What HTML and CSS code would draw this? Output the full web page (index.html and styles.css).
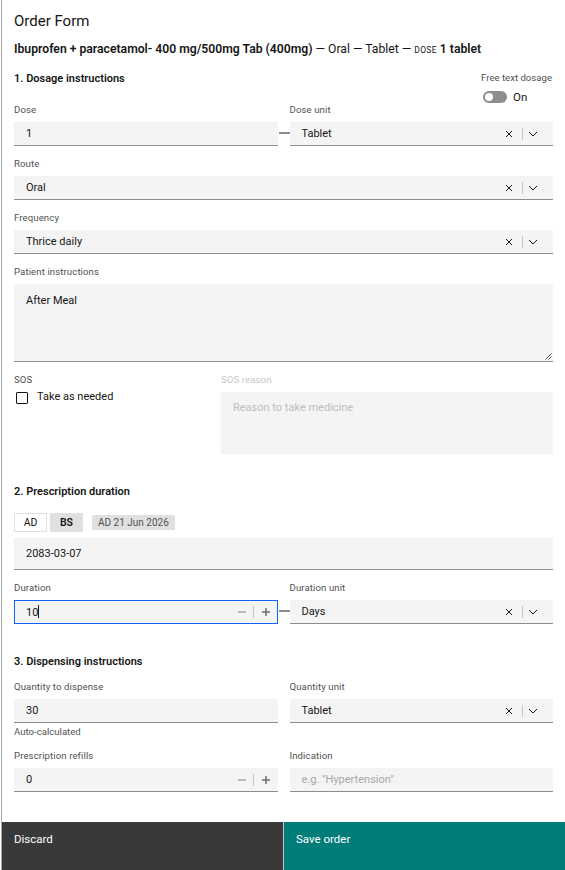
FILE: index.html
```html
<!DOCTYPE html>
<html lang="en">
<head>
<meta charset="utf-8">
<title>Order Form</title>
<link rel="stylesheet" href="styles.css">
</head>
<body>
<div class="page">
  <main class="form">
    <h1 class="title">Order Form</h1>
    <p class="drug"><strong>Ibuprofen + paracetamol- 400 mg/500mg Tab (400mg)</strong> — Oral — Tablet — <span class="caps">dose</span> <strong>1 tablet</strong></p>

    <section class="section first">
      <div class="section-head">
        <h2 class="heading">1. Dosage instructions</h2>
        <div class="freetext">
          <span class="label">Free text dosage</span>
          <div class="toggle-row"><span class="toggle"><span class="knob"></span></span><span class="toggle-text">On</span></div>
        </div>
      </div>

      <div class="pair">
        <div class="field">
          <span class="label">Dose</span>
          <div class="input linked"><span class="value">1</span></div>
        </div>
        <div class="field">
          <span class="label">Dose unit</span>
          <div class="input select">
            <span class="value">Tablet</span>
            <span class="sel-icons">
              <svg class="ico-x" width="8" height="8" viewBox="0 0 8 8"><path d="M1 1L7 7M7 1L1 7"/></svg>
              <span class="divider"></span>
              <svg class="ico-chev" width="10" height="6" viewBox="0 0 10 6"><path d="M1 1L5 5L9 1"/></svg>
            </span>
          </div>
        </div>
      </div>

      <div class="field">
        <span class="label">Route</span>
        <div class="input select">
          <span class="value">Oral</span>
          <span class="sel-icons">
            <svg class="ico-x" width="8" height="8" viewBox="0 0 8 8"><path d="M1 1L7 7M7 1L1 7"/></svg>
            <span class="divider"></span>
            <svg class="ico-chev" width="10" height="6" viewBox="0 0 10 6"><path d="M1 1L5 5L9 1"/></svg>
          </span>
        </div>
      </div>

      <div class="field">
        <span class="label">Frequency</span>
        <div class="input select">
          <span class="value">Thrice daily</span>
          <span class="sel-icons">
            <svg class="ico-x" width="8" height="8" viewBox="0 0 8 8"><path d="M1 1L7 7M7 1L1 7"/></svg>
            <span class="divider"></span>
            <svg class="ico-chev" width="10" height="6" viewBox="0 0 10 6"><path d="M1 1L5 5L9 1"/></svg>
          </span>
        </div>
      </div>

      <div class="field">
        <span class="label">Patient instructions</span>
        <div class="textarea">
          <span class="value">After Meal</span>
          <svg class="resize" width="7" height="7" viewBox="0 0 7 7"><path d="M6.5 0.5L0.5 6.5M6.5 3.5L3.5 6.5"/></svg>
        </div>
      </div>

      <div class="sos">
        <div class="field">
          <span class="label">SOS</span>
          <div class="check-row"><span class="checkbox"></span><span class="check-text">Take as needed</span></div>
        </div>
        <div class="field disabled">
          <span class="label">SOS reason</span>
          <div class="textarea short"><span class="placeholder">Reason to take medicine</span></div>
        </div>
      </div>
    </section>

    <section class="section">
      <h2 class="heading">2. Prescription duration</h2>
      <div class="cal-row">
        <button class="cal-btn">AD</button>
        <button class="cal-btn active">BS</button>
        <span class="tag">AD 21 Jun 2026</span>
      </div>
      <div class="input date"><span class="value">2083-03-07</span></div>
      <div class="pair duration">
        <div class="field">
          <span class="label">Duration</span>
          <div class="input number focused linked"><span class="value">10<span class="caret"></span></span>
            <span class="stepper">
              <svg class="ico-minus" width="8" height="8" viewBox="0 0 8 8"><path d="M0 4H8"/></svg>
              <span class="divider"></span>
              <svg class="ico-plus" width="8" height="8" viewBox="0 0 8 8"><path d="M0 4H8M4 0V8"/></svg>
            </span>
          </div>
        </div>
        <div class="field">
          <span class="label">Duration unit</span>
          <div class="input select">
            <span class="value">Days</span>
            <span class="sel-icons">
              <svg class="ico-x" width="8" height="8" viewBox="0 0 8 8"><path d="M1 1L7 7M7 1L1 7"/></svg>
              <span class="divider"></span>
              <svg class="ico-chev" width="10" height="6" viewBox="0 0 10 6"><path d="M1 1L5 5L9 1"/></svg>
            </span>
          </div>
        </div>
      </div>
    </section>

    <section class="section">
      <h2 class="heading">3. Dispensing instructions</h2>
      <div class="pair dispense">
        <div class="field">
          <span class="label">Quantity to dispense</span>
          <div class="input"><span class="value">30</span></div>
          <span class="helper">Auto-calculated</span>
        </div>
        <div class="field">
          <span class="label">Quantity unit</span>
          <div class="input select">
            <span class="value">Tablet</span>
            <span class="sel-icons">
              <svg class="ico-x" width="8" height="8" viewBox="0 0 8 8"><path d="M1 1L7 7M7 1L1 7"/></svg>
              <span class="divider"></span>
              <svg class="ico-chev" width="10" height="6" viewBox="0 0 10 6"><path d="M1 1L5 5L9 1"/></svg>
            </span>
          </div>
        </div>
        <div class="field">
          <span class="label">Prescription refills</span>
          <div class="input number"><span class="value">0</span>
            <span class="stepper">
              <svg class="ico-minus" width="8" height="8" viewBox="0 0 8 8"><path d="M0 4H8"/></svg>
              <span class="divider"></span>
              <svg class="ico-plus" width="8" height="8" viewBox="0 0 8 8"><path d="M0 4H8M4 0V8"/></svg>
            </span>
          </div>
        </div>
        <div class="field">
          <span class="label">Indication</span>
          <div class="input"><span class="placeholder">e.g. "Hypertension"</span></div>
        </div>
      </div>
    </section>
  </main>

  <footer class="actions">
    <button class="btn discard">Discard</button>
    <button class="btn save">Save order</button>
  </footer>
</div>
</body>
</html>
```

FILE: styles.css
```css
* { box-sizing: border-box; }

html, body {
  margin: 0;
  padding: 0;
  background: #ffffff;
}

body {
  font-family: Roboto, "Noto Sans", "Liberation Sans", sans-serif;
  color: #161616;
  font-size: 11px;
}

.page {
  margin-left: 1px;
  border-left: 1px solid #a8a8a8;
  height: 870px;
  display: flex;
  flex-direction: column;
}

.form {
  padding: 12px 12px 0 12px;
}

.title {
  margin: 0;
  font-size: 15px;
  line-height: 18px;
  font-weight: 400;
}

.drug {
  margin: 11px 0 0 0;
  font-size: 12.2px;
  line-height: 16px;
}

.drug strong { font-weight: 600; }

.caps {
  text-transform: uppercase;
  font-size: 8.5px;
  letter-spacing: 0.3px;
}

.section { margin-top: 31px; }
.section.first { margin-top: 14px; }

.section-head {
  display: flex;
  justify-content: space-between;
  align-items: flex-start;
}

.heading {
  margin: 0;
  font-size: 11px;
  line-height: 14px;
  font-weight: 600;
}

.freetext {
  display: flex;
  flex-direction: column;
  white-space: nowrap;
  margin-right: 1px;
}

.freetext .label { margin-bottom: 0; letter-spacing: 0; }

.toggle-row {
  display: flex;
  align-items: center;
  gap: 6px;
  margin-top: 7px;
  padding-left: 2px;
}

.toggle {
  width: 24px;
  height: 12px;
  border-radius: 6px;
  background: #8d8d8d;
  display: flex;
  align-items: center;
  padding-left: 2px;
}

.knob {
  width: 8px;
  height: 8px;
  border-radius: 50%;
  background: #ffffff;
}

.toggle-text { font-size: 11.5px; line-height: 12px; }

.label {
  display: block;
  font-size: 9.6px;
  line-height: 12px;
  color: #525252;
  margin-bottom: 6px;
  letter-spacing: 0.1px;
}

.field { margin-top: 12px; }
.section-head + .pair .field { margin-top: 1px; }

.pair {
  display: grid;
  grid-template-columns: 1fr 1fr;
  column-gap: 12px;
  align-items: start;
}

.input {
  position: relative;
  height: 24px;
  background: #f4f4f4;
  border-bottom: 1px solid #8d8d8d;
  display: flex;
  align-items: center;
  padding: 0 12px;
  font-size: 11px;
}

.input .value { flex: 1; }

.placeholder { color: #a8a8a8; }

.linked::after {
  content: "";
  position: absolute;
  right: -13px;
  top: 10px;
  width: 12px;
  height: 2px;
  background: #8d8d8d;
}

.sel-icons {
  display: flex;
  align-items: center;
  margin-right: 3px;
}

.ico-x path, .ico-chev path {
  stroke: #161616;
  stroke-width: 1;
  fill: none;
}

.divider {
  width: 1px;
  height: 12px;
  background: #c6c6c6;
  margin: 0 5px 0 9px;
}

.textarea {
  position: relative;
  height: 78px;
  background: #f4f4f4;
  border-bottom: 1px solid #8d8d8d;
  padding: 10px 12px;
  font-size: 11px;
  line-height: 14px;
}

.textarea.short {
  height: 62px;
  border-bottom: none;
  padding-top: 9px;
}

.resize {
  position: absolute;
  right: 1px;
  bottom: 1px;
}

.resize path {
  stroke: #525252;
  stroke-width: 1;
  fill: none;
}

.disabled .label { color: #c6c6c6; }
.disabled .placeholder { color: #bdbdbd; }

.sos {
  display: grid;
  grid-template-columns: 195px 1fr;
  column-gap: 12px;
  align-items: start;
}

.sos .field { margin-top: 12px; }

.check-row {
  display: flex;
  align-items: flex-start;
  gap: 9px;
  padding-left: 2px;
  margin-top: 1px;
}

.checkbox {
  width: 12px;
  height: 12px;
  border: 1px solid #161616;
  border-radius: 1px;
  margin-top: 0;
}

.check-text {
  font-size: 11px;
  line-height: 12px;
  margin-top: -1px;
}

.cal-row {
  display: flex;
  align-items: center;
  margin-top: 14px;
}

.cal-btn {
  font-family: inherit;
  font-size: 10.5px;
  color: #161616;
  height: 19px;
  width: 33px;
  padding: 0;
  border: 1px solid #e0e0e0;
  background: #ffffff;
  margin-right: 3px;
}

.cal-btn.active {
  background: #e0e0e0;
  border-color: #e0e0e0;
  font-weight: 600;
}

.tag {
  margin-left: 6px;
  background: #e0e0e0;
  color: #525252;
  font-size: 10px;
  line-height: 15px;
  height: 15px;
  padding: 0 6px;
  border-radius: 1px;
}

.input.date {
  margin-top: 6px;
  height: 32px;
}

.duration .field { margin-top: 12px; }

.input.focused {
  outline: 1px solid #0f62fe;
  outline-offset: -1px;
  border-bottom-color: #0f62fe;
}

.caret {
  display: inline-block;
  width: 1px;
  height: 13px;
  background: #161616;
  vertical-align: -2px;
}

.stepper {
  display: flex;
  align-items: center;
  margin-right: -4px;
}

.stepper .divider { margin: 0 8px 0 7px; }

.ico-minus path {
  stroke: #a8a8a8;
  stroke-width: 1.5;
  fill: none;
}

.ico-plus path {
  stroke: #6f6f6f;
  stroke-width: 1.5;
  fill: none;
}

.dispense { row-gap: 0; }
.dispense .field:nth-child(1), .dispense .field:nth-child(2) { margin-top: 12px; }

.helper {
  display: block;
  margin-top: 3px;
  font-size: 9.6px;
  line-height: 12px;
  color: #525252;
}

.actions {
  margin-top: auto;
  display: grid;
  grid-template-columns: 281px 1fr;
  column-gap: 1px;
  background: #c6c6c6;
  height: 48px;
}

.btn {
  font-family: inherit;
  font-size: 11.5px;
  color: #ffffff;
  border: none;
  text-align: left;
  padding: 10px 12px 0 12px;
  line-height: 14px;
  display: flex;
  align-items: flex-start;
}

.discard { background: #393939; }
.save { background: #007d79; }
```
